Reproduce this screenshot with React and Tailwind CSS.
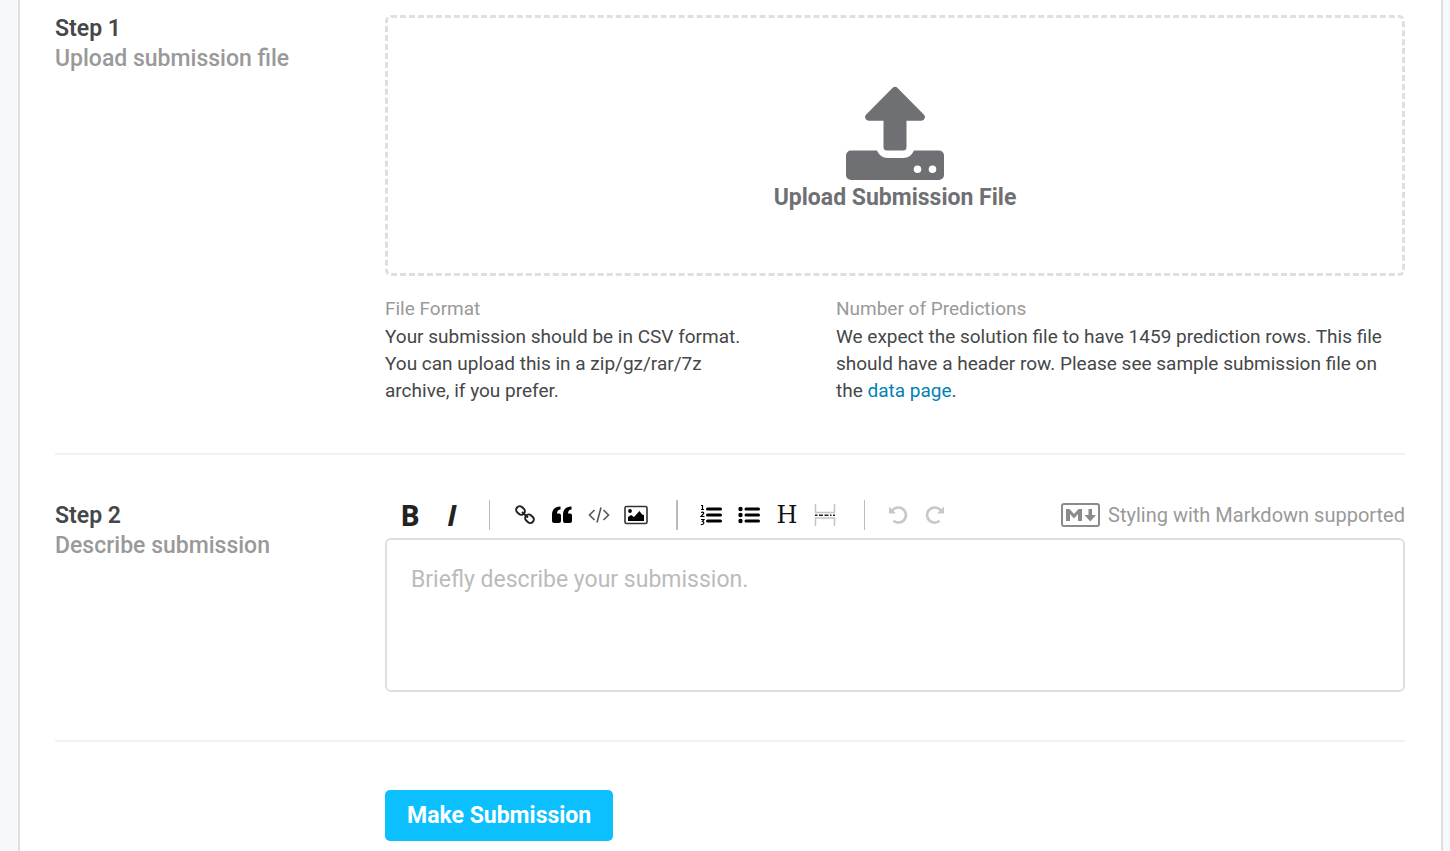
import React, { useState } from "react";

const UploadIcon = () => (
  <svg width="98" height="95" viewBox="0 0 98 95" fill="#6f7074" aria-hidden="true">
    <path d="M46.200 2.200a4 4 0 0 1 5.600 0L78 28.800a3.600 3.600 0 0 1-2.500 6H60.500V61a3.500 3.500 0 0 1-3.500 3.500H41A3.500 3.500 0 0 1 37.500 61V34.800h-15a3.600 3.600 0 0 1-2.500-6z" />
    <path
      fillRule="evenodd"
      d="M5 64.500h26C33 69 36.500 72 42 72h15c5.500 0 9-3 11-7.500h25a5 5 0 0 1 5 5V89a5 5 0 0 1-5 5H5a5 5 0 0 1-5-5V69.500a5 5 0 0 1 5-5zM71.500 79.500a3.800 3.800 0 1 0 0 7.600a3.800 3.800 0 0 0 0-7.600zm15 0a3.800 3.800 0 1 0 0 7.600a3.800 3.800 0 0 0 0-7.600z"
    />
  </svg>
);

const LinkIcon = () => (
  <svg width="22" height="22" viewBox="0 0 22 22" fill="none" stroke="#222" strokeWidth="2" aria-hidden="true">
    <rect x="-4.500" y="-3.500" width="9" height="7" rx="3.200" transform="translate(6.500 6.500) rotate(42)" />
    <rect x="-4.500" y="-3.500" width="9" height="7" rx="3.200" transform="translate(15.500 14.800) rotate(42)" />
    <path d="M8 8l6 5.500" />
  </svg>
);

const QuoteIcon = () => (
  <svg width="22" height="22" viewBox="0 0 22 22" fill="#000" aria-hidden="true">
    <path d="M9.500 2.500v3C7.500 5.500 6 7 6 9.500h2A2 2 0 0 1 10 11.500V17a2 2 0 0 1-2 2H3a2 2 0 0 1-2-2V10.500C1 5.500 4 2.500 9.500 2.500z" />
    <path d="M20.500 2.500v3C18.500 5.500 17 7 17 9.500h2A2 2 0 0 1 21 11.500V17a2 2 0 0 1-2 2h-5a2 2 0 0 1-2-2V10.500C12 5.500 15 2.500 20.500 2.500z" />
  </svg>
);

const CodeIcon = () => (
  <svg width="22" height="22" viewBox="0 0 22 22" fill="none" stroke="#555" strokeWidth="1.600" aria-hidden="true">
    <path d="M6.500 6L1.500 11l5 5M15.500 6l5 5-5 5M13 3.500L9 18.500" />
  </svg>
);

const ImageIcon = () => (
  <svg width="24" height="22" viewBox="0 0 24 22" aria-hidden="true">
    <rect x="1" y="2.500" width="22" height="17" rx="1.500" fill="none" stroke="#333" strokeWidth="1.600" />
    <circle cx="6" cy="7" r="1.900" />
    <path d="M4 17v-4l3-2 3 2 5.500-6 2.500 3.500 2 .5v6z" />
  </svg>
);

const OrderedIcon = () => (
  <svg width="22" height="22" viewBox="0 0 22 22" fill="none" stroke="#000" aria-hidden="true">
    <path d="M7.500 5h13M7.500 11h13M7.500 17h13" strokeWidth="3" strokeLinecap="round" />
    <path
      d="M1 1.500h1.500v4M1 5.500h3M1 8.500c2-.8 3 0 2.500 1.200L1 12.500h3.500M1 15.500h3l-1.500 2c2 0 2 3.500-1.700 3"
      strokeWidth="1.200"
    />
  </svg>
);

const BulletIcon = () => (
  <svg width="22" height="22" viewBox="0 0 22 22" aria-hidden="true">
    <path d="M8 5h12.500M8 11h12.500M8 17h12.500" stroke="#000" strokeWidth="3" strokeLinecap="round" />
    <circle cx="2.500" cy="5" r="2.200" />
    <circle cx="2.500" cy="11" r="2.200" />
    <circle cx="2.500" cy="17" r="2.200" />
  </svg>
);

const RuleIcon = () => (
  <svg width="22" height="24" viewBox="0 0 22 24" fill="none" aria-hidden="true">
    <path d="M1.500 1v8.500h19V1M1.500 23v-8h19v8" stroke="#c4c4c4" strokeWidth="1.500" />
    <path d="M1 12.200h2.500M5 12.200h4M10.500 12.200h4M16 12.200h1.500M19 12.200h2" stroke="#222" strokeWidth="1.600" />
  </svg>
);

const UndoIcon = ({ flipped }) => (
  <svg
    width="20"
    height="20"
    viewBox="0 0 20 20"
    className={flipped ? "-scale-x-100" : ""}
    aria-hidden="true"
  >
    <path d="M3.500 6.500C5 4 7.500 2.500 10.500 2.500a7.500 7.500 0 1 1-5 13.200" fill="none" stroke="#c8c8c8" strokeWidth="2.700" />
    <path d="M1 1.500v7h7z" fill="#c8c8c8" />
  </svg>
);

const MarkdownIcon = () => (
  <svg width="39" height="24" viewBox="0 0 39 24" aria-hidden="true">
    <rect x="1" y="1" width="37" height="22" rx="2" fill="none" stroke="#8b8b8b" strokeWidth="2" />
    <path d="M5 18V6h3.500l4.500 5 4.500-5H21v12h-4v-7L13 15.500 9 11v7z" fill="#8b8b8b" />
    <path d="M27.500 6h3.500v6h4l-5.700 6.500L23.500 12h4z" fill="#8b8b8b" />
  </svg>
);

const GROUPS = [
  [
    { label: "Link", icon: <LinkIcon /> },
    { label: "Quote", icon: <QuoteIcon /> },
    { label: "Code", icon: <CodeIcon /> },
    { label: "Image", icon: <ImageIcon /> },
  ],
  [
    { label: "Numbered list", icon: <OrderedIcon /> },
    { label: "Bulleted list", icon: <BulletIcon /> },
    {
      label: "Heading",
      icon: <span className="font-['DejaVu_Serif',serif] text-2xl leading-6 text-[#111]">H</span>,
    },
    { label: "Horizontal rule", icon: <RuleIcon /> },
  ],
];

function ToolButton({ label, width = "w-[37px]", disabled, children }) {
  return (
    <button
      type="button"
      aria-label={label}
      disabled={disabled}
      className={`flex h-[30px] items-center justify-center ${width}`}
    >
      {children}
    </button>
  );
}

function Toolbar() {
  return (
    <div className="flex items-center pl-1">
      <ToolButton label="Bold" width="w-[42px]">
        <span className="font-['Open_Sans',sans-serif] text-[29px] leading-[30px] font-bold text-[#222]">B</span>
      </ToolButton>
      <ToolButton label="Italic" width="w-[42px]">
        <span className="font-['Open_Sans',sans-serif] text-[29px] leading-[30px] font-bold text-[#222] italic">I</span>
      </ToolButton>
      <div className="mr-4 ml-4 h-[30px] w-px bg-[#bbb]" />
      {GROUPS[0].map((t) => (
        <ToolButton key={t.label} label={t.label}>
          {t.icon}
        </ToolButton>
      ))}
      <div className="mr-[14px] ml-[22px] h-[30px] w-0.5 bg-[#bbb]" />
      {GROUPS[1].map((t) => (
        <ToolButton key={t.label} label={t.label} width="w-[38px]">
          {t.icon}
        </ToolButton>
      ))}
      <div className="mr-[14px] ml-5 h-[30px] w-px bg-[#bbb]" />
      <ToolButton label="Undo" disabled>
        <UndoIcon />
      </ToolButton>
      <ToolButton label="Redo" disabled>
        <UndoIcon flipped />
      </ToolButton>
    </div>
  );
}

function StepLabel({ step, title, htmlFor }) {
  return (
    <div className="w-[330px] shrink-0 pt-[14px]">
      <label htmlFor={htmlFor} className="block text-[23px] leading-[30px] font-medium">
        <span className="block font-semibold text-[#454749]">{step}</span>
        <span className="block text-[#999]">{title}</span>
      </label>
    </div>
  );
}

export default function App() {
  const [fileName, setFileName] = useState("");
  const [description, setDescription] = useState("");

  return (
    <div className="min-h-screen bg-[#f5f9fb] pr-[7px] pl-[18px] font-[Roboto,'Liberation_Sans',sans-serif] text-[#454749]">
      <form
        className="min-h-screen border-x-2 border-[#dedfe0] bg-white pr-9 pl-[35px]"
        onSubmit={(e) => e.preventDefault()}
      >
        {/* Step 1 */}
        <section className="flex border-b-2 border-[#f1f1f1] pb-[49px]">
          <StepLabel step="Step 1" title="Upload submission file" htmlFor="file" />
          <div className="flex-1 pt-[15px]">
            <label className="flex h-[261px] cursor-pointer flex-col items-center rounded-md border-3 border-dashed border-[#dedfe0] pt-[68px] text-[23px] leading-[34px] font-bold text-[#6f7074]">
              <UploadIcon />
              {fileName || "Upload Submission File"}
              <input
                id="file"
                type="file"
                className="sr-only"
                onChange={(e) => setFileName(e.target.files[0]?.name || "")}
              />
            </label>
            <div className="flex pt-[19px] text-[19px] leading-[27px]">
              <div className="w-[451px] shrink-0">
                <h3 className="pb-px text-[#999]">File Format</h3>
                <p>
                  Your submission should be in CSV format.
                  <br />
                  You can upload this in a zip/gz/rar/7z
                  <br />
                  archive, if you prefer.
                </p>
              </div>
              <div className="flex-1">
                <h3 className="pb-px text-[#999]">Number of Predictions</h3>
                <p>
                  We expect the solution file to have 1459 prediction rows. This file
                  <br />
                  should have a header row. Please see sample submission file on
                  <br />
                  the{" "}
                  <a href="#data" className="text-[#0082b4]">
                    data page
                  </a>
                  .
                </p>
              </div>
            </div>
          </div>
        </section>

        {/* Step 2 */}
        <section className="flex border-b-2 border-[#f1f1f1] pt-8 pb-12">
          <StepLabel step="Step 2" title="Describe submission" htmlFor="description" />
          <div className="flex-1 pt-[13px]">
            <div className="flex items-center justify-between pb-2">
              <Toolbar />
              <div className="flex items-center gap-2 text-[20px] leading-[30px] text-[#999]">
                <MarkdownIcon />
                <span>Styling with Markdown supported</span>
              </div>
            </div>
            <textarea
              id="description"
              value={description}
              onChange={(e) => setDescription(e.target.value)}
              placeholder="Briefly describe your submission."
              className="block h-[154px] w-full resize-none rounded-md border-2 border-[#dedfe0] px-6 py-[25px] text-[23px] leading-[30px] placeholder:text-[#bbb]"
            />
          </div>
        </section>

        <div className="pt-12 pb-2.5 pl-[330px]">
          <button
            type="submit"
            className="h-[51px] rounded-[5px] bg-[#0cc0ff] px-[22px] text-[23px] leading-[30px] font-bold text-white"
          >
            Make Submission
          </button>
        </div>
      </form>
    </div>
  );
}
